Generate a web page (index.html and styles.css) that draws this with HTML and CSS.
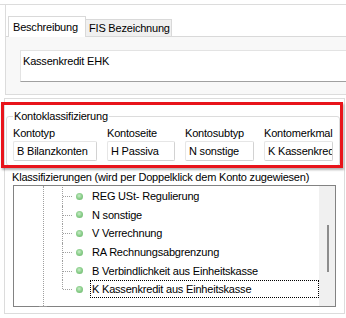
FILE: index.html
```html
<!DOCTYPE html>
<html lang="de">
  <head>
    <meta charset="UTF-8" />
    <title>Konto</title>
    <link rel="stylesheet" href="styles.css">
  </head>
  <body>
    <div class="tabctl">
      <div class="tabctl-inner">
        <div class="tabs">
          <div class="tab active">Beschreibung</div>
          <div class="tab">FIS Bezeichnung</div>
        </div>
        <div class="tabpanel">
          <div class="textfield">Kassenkredit EHK</div>
        </div>
      </div>
    </div>

    <div class="mainbox">
      <fieldset class="group">
        <legend>Kontoklassifizierung</legend>
        <div class="fields">
          <div class="field">
            <div class="field-label">Kontotyp</div>
            <div class="combo">B Bilanzkonten</div>
          </div>
          <div class="field">
            <div class="field-label">Kontoseite</div>
            <div class="combo">H Passiva</div>
          </div>
          <div class="field">
            <div class="field-label">Kontosubtyp</div>
            <div class="combo">N sonstige</div>
          </div>
          <div class="field">
            <div class="field-label">Kontomerkmal</div>
            <div class="combo">K Kassenkredit</div>
          </div>
        </div>
      </fieldset>

      <div class="list-label">Klassifizierungen (wird per Doppelklick dem Konto zugewiesen)</div>
      <div class="listbox">
        <div class="tree">
          <div class="nodes">
            <div class="node"><span class="dot"></span><span class="node-text">REG USt- Regulierung</span></div>
            <div class="node"><span class="dot"></span><span class="node-text">N sonstige</span></div>
            <div class="node"><span class="dot"></span><span class="node-text">V Verrechnung</span></div>
            <div class="node"><span class="dot"></span><span class="node-text">RA Rechnungsabgrenzung</span></div>
            <div class="node"><span class="dot"></span><span class="node-text">B Verbindlichkeit aus Einheitskasse</span></div>
            <div class="node last"><span class="dot"></span><span class="node-text focused">K Kassenkredit aus Einheitskasse</span></div>
          </div>
        </div>
        <div class="scrollbar"><div class="thumb"></div></div>
      </div>
    </div>

    <!-- red annotation frame drawn over the group box -->
    <div class="highlight"></div>
  </body>
</html>
```

FILE: styles.css
```css
body {
  margin: 0;
  background: #fff;
  color: #000;
  font-family: "Liberation Sans", Arial, sans-serif;
  font-size: 11px;
  line-height: 14px;
  letter-spacing: -0.2px;
}

/* tab control */
.tabctl {
  margin-top: 4px;
  border-top: 1px solid #dcdcdc;
}
.tabctl-inner {
  margin-left: 5px;
  border-left: 1px solid #dcdcdc;
}
.tabs {
  display: flex;
  align-items: flex-end;
  padding: 11px 0 0 2px;
}
.tab {
  box-sizing: border-box;
  height: 17px;
  padding: 1px 4px 0 3px;
  width: 86px;
  background: #f0f0f0;
  border: 1px solid #d9d9d9;
  border-bottom: none;
  border-left: none;
  white-space: nowrap;
}
.tab.active {
  height: 21px;
  margin-bottom: -1px;
  padding: 3px 8px 0 4px;
  width: 78px;
  background: #fff;
  border-left: 1px solid #d9d9d9;
  position: relative;
  z-index: 1;
}
.tabpanel {
  background: #f8f8f8;
  border-top: 1px solid #d9d9d9;
  border-bottom: 1px solid #dcdcdc;
  padding: 13px 0 12px 14px;
}
.textfield {
  box-sizing: border-box;
  height: 32px;
  padding: 3px 2px 0;
  background: #fff;
  border-top: 1px solid #e3e3e3;
  border-left: 1px solid #e3e3e3;
  border-bottom: 1px solid #a0a0a0;
}

/* lower box */
.mainbox {
  margin: 3px 1px 0 4px;
  border: 1px solid #dcdcdc;
  padding-bottom: 6px;
}
.group {
  margin: 10px 6px 0 1px;
  padding: 3px 6px 4px;
  border: 1px solid #dcdcdc;
  border-radius: 3px;
}
.group legend {
  padding: 0 1px;
  line-height: 14px;
}
.fields {
  display: grid;
  grid-template-columns: 84px 68px 69px 69px;
  column-gap: 10px;
}
.field-label {
  white-space: nowrap;
}
.combo {
  box-sizing: border-box;
  height: 20px;
  margin-top: 1px;
  padding: 2px 0 0 3px;
  background: #fff;
  border: 1px solid #e6e6e6;
  border-right-color: #d2d2d2;
  border-bottom-color: #d2d2d2;
  border-radius: 2px;
  white-space: nowrap;
  overflow: hidden;
}

.list-label {
  margin: 4px 0 0 7px;
  white-space: nowrap;
}
.listbox {
  display: flex;
  height: 122px;
  box-sizing: border-box;
  margin: 1px 8px 0 8px;
  border: 1px solid #828282;
}
.tree {
  flex: 1;
  margin-left: 29px;
  border-left: 1px dotted #a0a0a0;
  position: relative;
}
.tree::after {
  content: "";
  position: absolute;
  left: -5px;
  bottom: -1px;
  width: 8px;
  border-top: 1px solid #9a9a9a;
}
.nodes {
  margin-left: 18px;
  padding-top: 1px;
}
.node {
  position: relative;
  display: flex;
  align-items: center;
  height: 18.6px;
}
.node::before {
  content: "";
  position: absolute;
  left: 0;
  top: 0;
  bottom: 0;
  border-left: 1px dotted #a0a0a0;
}
.node.last::before {
  bottom: 50%;
}
.node::after {
  content: "";
  position: absolute;
  left: 1px;
  top: 50%;
  width: 9px;
  border-top: 1px dotted #a0a0a0;
}
.dot {
  width: 7px;
  height: 7px;
  margin-left: 14px;
  border-radius: 50%;
  background: radial-gradient(circle at 45% 40%, #c9ecc9 0, #8ed08e 45%, #62b062 100%);
  flex: none;
}
.node-text {
  margin-left: 7px;
  padding-left: 1px;
  border: 1px solid transparent;
  line-height: 16px;
  white-space: nowrap;
}
.node-text.focused {
  flex: 1;
  border: 1px dotted #000;
}
.scrollbar {
  width: 16px;
  background: #f0f0f0;
}
.thumb {
  width: 2px;
  height: 47px;
  margin: 39px 0 0 8px;
  background: #8c8c8c;
}

.highlight {
  position: absolute;
  left: 1px;
  top: 102px;
  width: 342px;
  height: 66px;
  box-sizing: border-box;
  border: 3px solid #e8141b;
  box-shadow: 1px 2px 2px rgba(0, 0, 0, 0.3);
}
```
